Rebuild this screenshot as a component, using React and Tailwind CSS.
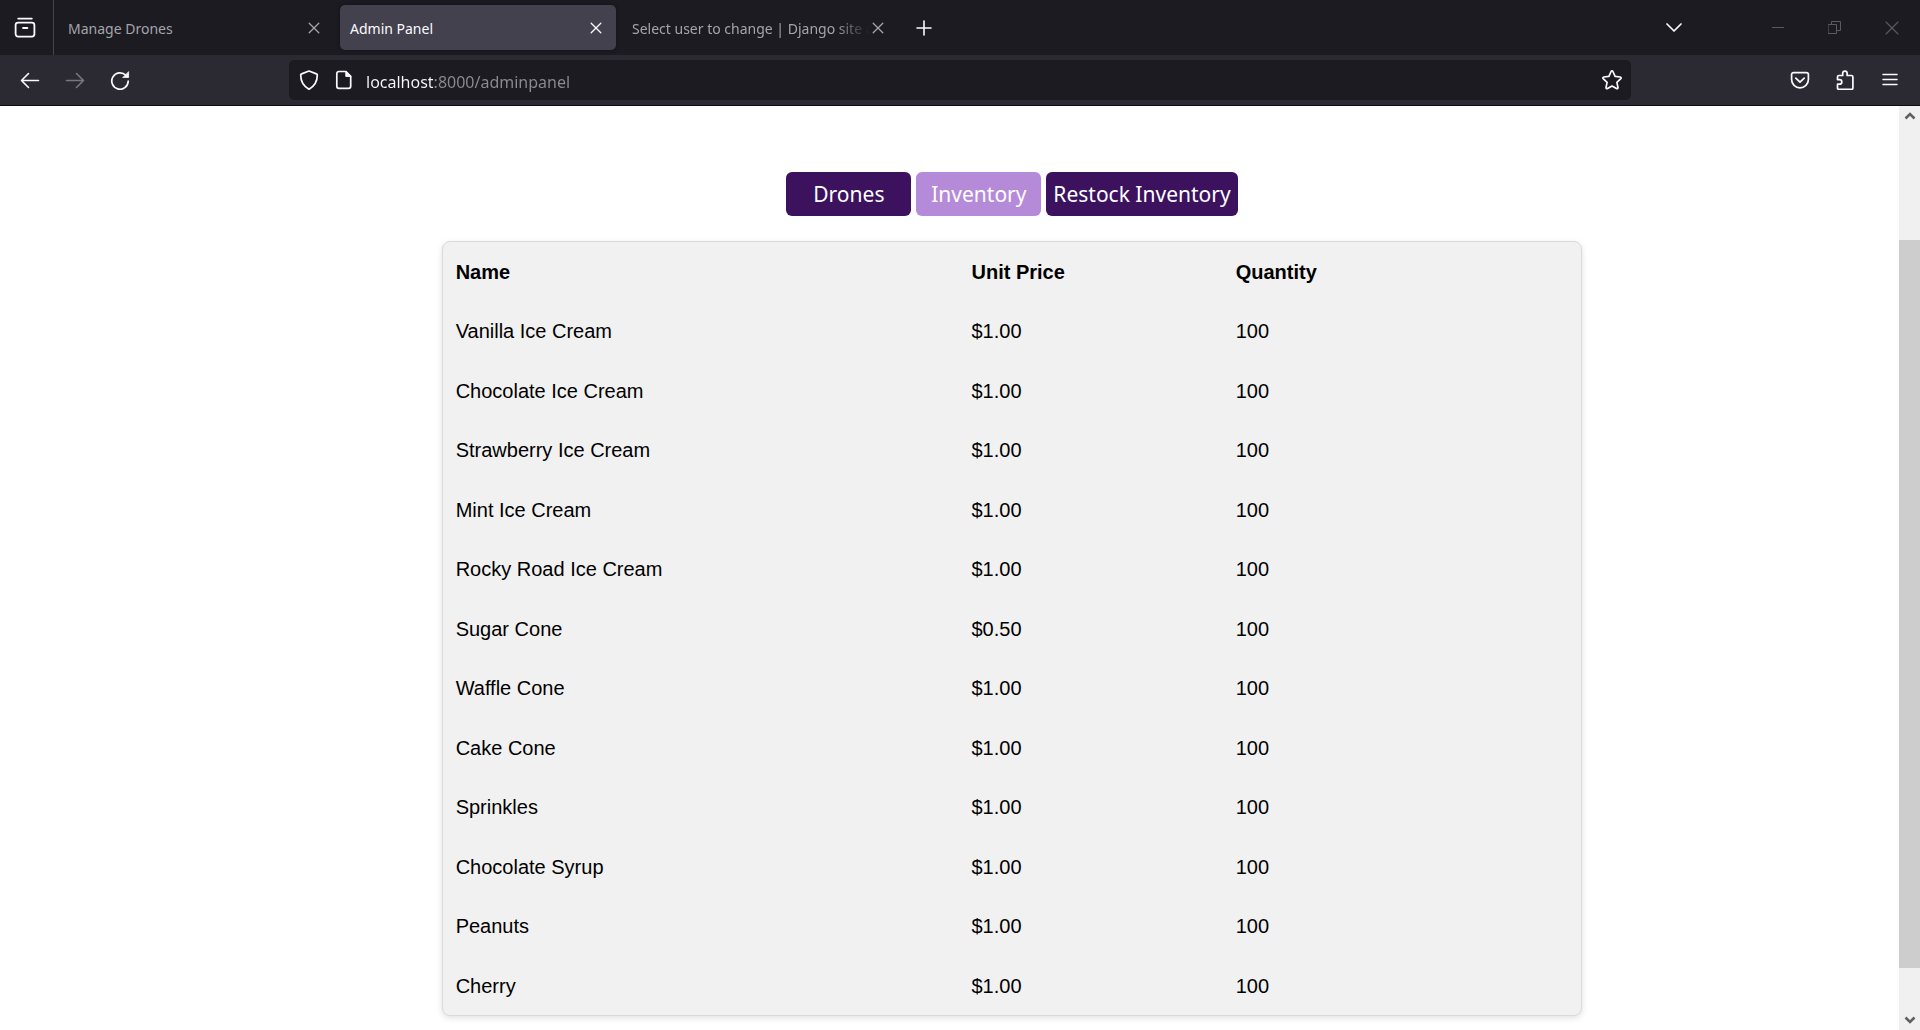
import React from 'react';

const items = [
  ['Vanilla Ice Cream', '$1.00', '100'],
  ['Chocolate Ice Cream', '$1.00', '100'],
  ['Strawberry Ice Cream', '$1.00', '100'],
  ['Mint Ice Cream', '$1.00', '100'],
  ['Rocky Road Ice Cream', '$1.00', '100'],
  ['Sugar Cone', '$0.50', '100'],
  ['Waffle Cone', '$1.00', '100'],
  ['Cake Cone', '$1.00', '100'],
  ['Sprinkles', '$1.00', '100'],
  ['Chocolate Syrup', '$1.00', '100'],
  ['Peanuts', '$1.00', '100'],
  ['Cherry', '$1.00', '100'],
];

function Icon({ size = 20, width = 1.5, className = '', children }) {
  return (
    <svg
      width={size}
      height={size}
      viewBox={`0 0 ${size} ${size}`}
      fill="none"
      stroke="currentColor"
      strokeWidth={width}
      strokeLinecap="round"
      strokeLinejoin="round"
      className={`shrink-0 ${className}`}
      aria-hidden="true"
    >
      {children}
    </svg>
  );
}

const CloseIcon = () => (
  <Icon size={12} width={1.3}>
    <path d="M1.2 1.2l9.6 9.6M10.8 1.2l-9.6 9.6" />
  </Icon>
);

function IconButton({ label, className = '', children }) {
  return (
    <button type="button" aria-label={label} className={`flex shrink-0 items-center justify-center ${className}`}>
      {children}
    </button>
  );
}

function Tab({ title, active = false, fade = false }) {
  return (
    <div
      className={`flex h-[45px] w-[276px] items-center rounded-[5px] pr-3 pl-[10px] ${
        active ? 'bg-[#42414d] text-[#fbfbfe] shadow-[0_0_4px_rgba(0,0,0,0.4)]' : 'text-[#a5a4a9]'
      }`}
    >
      <button
        type="button"
        className={`min-w-0 flex-1 pt-[2px] text-left text-sm leading-5 whitespace-nowrap ${
          fade ? '[mask-image:linear-gradient(to_left,transparent,black_36px)]' : ''
        }`}
      >
        {title}
      </button>
      <IconButton label={`Close ${title}`} className="size-4">
        <CloseIcon />
      </IconButton>
    </div>
  );
}

function TabBar() {
  return (
    <div className="flex h-[55px] items-center bg-[#1c1b22] text-[#fbfbfe]">
      <IconButton label="Recent browsing" className="h-full w-[54px] border-r border-[#46454d] pr-1">
        <Icon size={22} width={1.8}>
          <path d="M4.2 1.6h13.6" />
          <rect x="1.6" y="5.6" width="18.8" height="14" rx="2.5" />
          <path d="M9 11h4.4" />
        </Icon>
      </IconButton>
      <div className="flex gap-[6px] pl-1">
        <Tab title="Manage Drones" />
        <Tab title="Admin Panel" active />
        <Tab title="Select user to change | Django site a" fade />
      </div>
      <IconButton label="New tab" className="ml-[10px] size-8">
        <Icon size={16} width={1.6}>
          <path d="M8 1v14M1 8h14" />
        </Icon>
      </IconButton>
      <div className="ml-auto flex items-center">
        <IconButton label="List all tabs" className="mr-[59px] size-8">
          <Icon size={16} width={1.7}>
            <path d="M1 4l7 7 7-7" />
          </Icon>
        </IconButton>
        <div className="flex text-[#5b5a60]">
          <IconButton label="Minimize" className="h-8 w-[57px]">
            <Icon size={14} width={1}>
              <path d="M1.5 6.5h11" />
            </Icon>
          </IconButton>
          <IconButton label="Restore" className="h-8 w-[57px]">
            <Icon size={13} width={1}>
              <path d="M.5 3.5h8v9h-8zM3.5 3.5v-3h9v9h-4" />
            </Icon>
          </IconButton>
          <IconButton label="Close window" className="h-8 w-[57px]">
            <Icon size={14} width={1.1}>
              <path d="M1 1l12 12M13 1L1 13" />
            </Icon>
          </IconButton>
        </div>
      </div>
    </div>
  );
}

function Toolbar() {
  return (
    <div className="flex h-[51px] items-center border-b border-[#0c0c0d] bg-[#2b2a33] pr-[14px] pl-[14px] text-[#fbfbfe]">
      <div className="flex gap-[13px]">
        <IconButton label="Back" className="size-8">
          <Icon width={1.6}>
            <path d="M18.5 10.5h-17M8.5 3.5l-7 7 7 7" />
          </Icon>
        </IconButton>
        <IconButton label="Forward" className="size-8 text-[#77767c]">
          <Icon width={1.6}>
            <path d="M1.5 10.5h17M11.5 3.5l7 7-7 7" />
          </Icon>
        </IconButton>
        <IconButton label="Reload" className="size-8">
          <Icon width={1.7}>
            <path d="M18.2 11.2A8.2 8.2 0 1 1 15.8 5.2" />
            <path d="M18.600 2v5.500h-5.500z" fill="currentColor" strokeWidth="0.8" />
          </Icon>
        </IconButton>
      </div>
      <div className="ml-[153px] flex h-10 flex-1 items-center rounded-[5px] bg-[#1c1b22] pr-[3px] pl-1">
        <IconButton label="Tracking protection" className="size-8">
          <Icon width={1.7}>
            <path d="M10 1l7.4 2.9c.6.2.9.7.9 1.2 0 6-2.5 11-8.3 14.2C4.200 16.100 1.700 11.100 1.700 5.100c0-.5.3-1 .9-1.200z" />
          </Icon>
        </IconButton>
        <IconButton label="Site information" className="ml-[3px] size-8">
          <Icon width={1.7}>
            <path d="M12 1.500H4.800A2 2 0 0 0 2.800 3.500v12.800a2 2 0 0 0 2 2h9.900a2 2 0 0 0 2-2V6.300z" />
            <path d="M11.800 1.500v4.900h4.900z" fill="currentColor" strokeWidth="1" />
          </Icon>
        </IconButton>
        <input
          type="text"
          aria-label="Address"
          defaultValue="localhost:8000/adminpanel"
          className="ml-[6px] h-8 min-w-0 flex-1 bg-[linear-gradient(to_right,#fbfbfe_67px,#8c8b91_67px)] bg-clip-text pt-[3px] text-base leading-6 text-transparent outline-none"
        />
        <IconButton label="Bookmark this page" className="size-8">
          <Icon width={1.700}>
            <path d="M9.100 1.500a1 1 0 0 1 1.800 0l2.200 4.900 5.200.6a1 1 0 0 1 .5 1.700l-3.900 3.600 1.100 5.300a1 1 0 0 1-1.500 1L10 16l-4.500 2.600a1 1 0 0 1-1.500-1l1.100-5.300L1.200 8.700A1 1 0 0 1 1.700 7l5.200-.6z" />
          </Icon>
        </IconButton>
      </div>
      <div className="ml-[153px] flex gap-[13px]">
        <IconButton label="Save to Pocket" className="size-8">
          <Icon width={1.700}>
            <path d="M3.600 2.600h12.800a2 2 0 0 1 2 2v4.800a8.400 8.400 0 0 1-16.800 0V4.600a2 2 0 0 1 2-2z" />
            <path d="M5.800 8.100l4.200 4 4.200-4" />
          </Icon>
        </IconButton>
        <IconButton label="Extensions" className="size-8">
          <Icon width={1.700}>
            <path d="M7.700 5.500V3.300a2.200 2.200 0 0 1 4.400 0v2.200h4.300a1.500 1.500 0 0 1 1.500 1.500v10.900a1.500 1.500 0 0 1-1.500 1.500H4a1.500 1.500 0 0 1-1.500-1.500v-3.700h2a2.300 2.300 0 0 0 0-4.600h-2V7A1.500 1.500 0 0 1 4 5.500z" />
          </Icon>
        </IconButton>
        <IconButton label="Open menu" className="size-8">
          <Icon size={16} width={1.500}>
            <path d="M1 2.500h14M1 7.500h14M1 12.500h14" />
          </Icon>
        </IconButton>
      </div>
    </div>
  );
}

function PageButton({ children, active = false }) {
  return (
    <button
      type="button"
      className={`h-11 min-w-[125px] rounded-[6px] px-[7px] text-[21px] leading-7 text-white ${
        active ? 'bg-[#b58ad9]' : 'bg-[#3c125f]'
      }`}
    >
      {children}
    </button>
  );
}

function InventoryTable() {
  return (
    <div className="w-[64.3%] rounded-[8px] border border-[#dadada] bg-[#f1f1f1] shadow-[0_2px_6px_rgba(0,0,0,0.12)]">
      <table className="w-full table-fixed text-left font-['Liberation_Sans',Arial,sans-serif] text-xl leading-6 text-black">
        <colgroup>
          <col className="w-[45.3%]" />
          <col className="w-[23.2%]" />
          <col />
        </colgroup>
        <thead>
          <tr className="h-[59px]">
            <th className="px-[13px] font-bold">Name</th>
            <th className="px-[13px] font-bold">Unit Price</th>
            <th className="px-[13px] font-bold">Quantity</th>
          </tr>
        </thead>
        <tbody>
          {items.map(([name, price, quantity]) => (
            <tr key={name} className="odd:h-[60px] even:h-[59px]">
              <td className="px-[13px]">{name}</td>
              <td className="px-[13px]">{price}</td>
              <td className="px-[13px]">{quantity}</td>
            </tr>
          ))}
        </tbody>
      </table>
    </div>
  );
}

function ScrollBar() {
  return (
    <div className="flex w-[21px] shrink-0 flex-col items-center bg-[#f0f0f0] text-[#606060]" aria-hidden="true">
      <div className="flex h-5 items-center">
        <Icon size={12} width={2.500}>
          <path d="M1.500 8.500L6 4l4.500 4.500" strokeLinecap="butt" strokeLinejoin="miter" />
        </Icon>
      </div>
      <div className="flex w-full flex-1 flex-col">
        <div className="flex-[114]" />
        <div className="flex-[728] bg-[#cdcdcd]" />
        <div className="flex-[42]" />
      </div>
      <div className="flex h-5 items-center">
        <Icon size={12} width={2.500}>
          <path d="M1.500 3.500L6 8l4.500-4.500" strokeLinecap="butt" strokeLinejoin="miter" />
        </Icon>
      </div>
    </div>
  );
}

export default function App() {
  return (
    <div className="flex min-h-screen flex-col bg-white font-['Noto_Sans','Open_Sans',sans-serif]">
      <header>
        <TabBar />
        <Toolbar />
      </header>
      <div className="flex flex-1">
        <main className="flex flex-1 flex-col items-center pt-[66px] pl-[125px]">
          <nav className="mb-[25px] flex gap-[5px]">
            <PageButton>Drones</PageButton>
            <PageButton active>Inventory</PageButton>
            <PageButton>Restock Inventory</PageButton>
          </nav>
          <InventoryTable />
        </main>
        <ScrollBar />
      </div>
    </div>
  );
}
